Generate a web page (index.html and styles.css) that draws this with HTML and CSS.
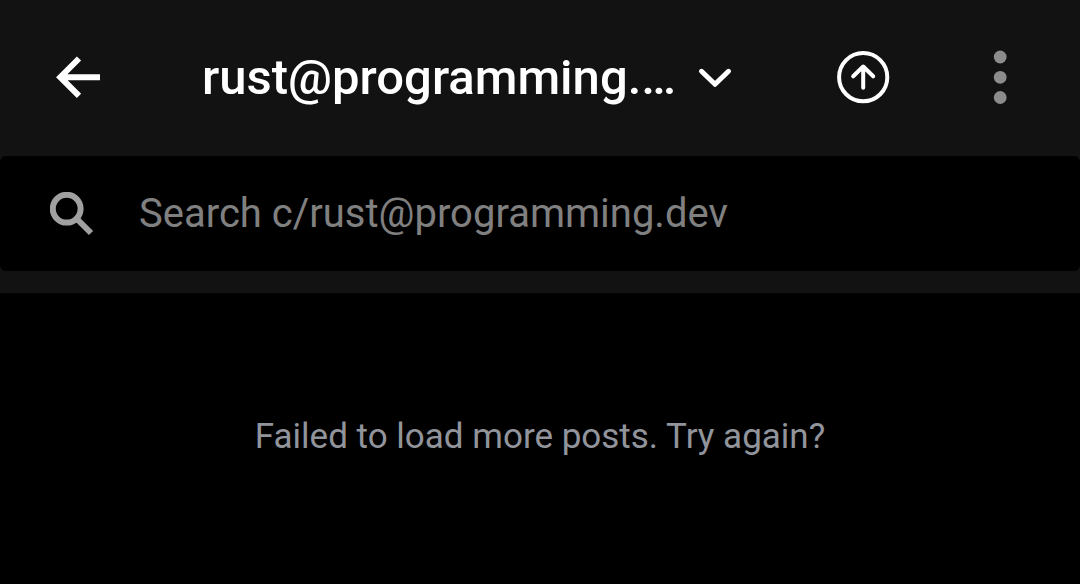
FILE: index.html
```html
<!DOCTYPE html>
<html lang="en">
<head>
<meta charset="utf-8">
<meta name="viewport" content="width=device-width, initial-scale=1">
<title>rust@programming.dev</title>
<link rel="stylesheet" href="styles.css">
</head>
<body>
<header class="header">
  <div class="toolbar">
    <button class="icon-button" type="button" aria-label="Back">
      <svg class="icon-back" viewBox="0 0 48 48" aria-hidden="true"><path d="M25 5.500 6.300 24.200 25 42.900M7 24.200h39"/></svg>
    </button>
    <button class="title" type="button">
      <span class="title-text">rust@programming.dev</span>
      <svg class="icon-chevron" viewBox="0 0 36 24" aria-hidden="true"><path d="M4.500 6.300 18 19.300 31.500 6.300"/></svg>
    </button>
    <button class="icon-button" type="button" aria-label="Sort by top">
      <svg class="icon-sort" viewBox="0 0 56 56" aria-hidden="true"><circle cx="27.200" cy="28.200" r="24.100"/><path d="M27.200 38.800V17.500M17.200 27.300 27.200 17.500 37.200 27.300"/></svg>
    </button>
    <button class="icon-button" type="button" aria-label="More options">
      <svg class="icon-more" viewBox="0 0 16 56" aria-hidden="true"><circle cx="8.200" cy="8" r="6.400"/><circle cx="8.200" cy="28.300" r="6.400"/><circle cx="8.200" cy="48.500" r="6.400"/></svg>
    </button>
  </div>
  <label class="search">
    <svg class="icon-search" viewBox="0 0 44 44" aria-hidden="true"><circle cx="16.700" cy="16.700" r="13.900"/><path d="M26 26l15 15"/></svg>
    <input class="search-input" type="search" aria-label="Search community" placeholder="Search c/rust@programming.dev">
  </label>
</header>
<main class="feed">
  <button class="retry" type="button">Failed to load more posts. Try again?</button>
</main>
</body>
</html>
```
FILE: styles.css
```css
* { box-sizing: border-box; }
body {
  margin: 0;
  background: #000;
  color: #fff;
  font-family: Roboto, "Liberation Sans", sans-serif;
}
button {
  margin: 0;
  padding: 0;
  border: 0;
  background: none;
  color: inherit;
  font: inherit;
}
svg {
  display: block;
  flex: none;
  fill: none;
  stroke: currentColor;
}
.header {
  padding-bottom: 22px;
  background: #121212;
}
.toolbar {
  display: flex;
  align-items: center;
  height: 156px;
  padding: 0 12px 2px 10px;
}
.icon-button {
  display: grid;
  place-items: center;
  flex: none;
  width: 136px;
  height: 136px;
}
.title {
  display: flex;
  flex: 1;
  align-items: center;
  gap: 20px;
  min-width: 0;
  padding: 0 63px 0 56px;
  font-size: 49px;
  font-weight: 500;
  line-height: 64px;
}
.title-text {
  overflow: hidden;
  min-width: 0;
  padding-top: 2px;
  text-overflow: ellipsis;
  white-space: nowrap;
}
.icon-back { width: 48px; height: 48px; stroke-width: 6; }
.icon-chevron { width: 36px; height: 24px; stroke-width: 5; stroke-linecap: round; stroke-linejoin: round; }
.icon-sort { width: 56px; height: 56px; stroke-width: 4; stroke-linecap: round; stroke-linejoin: round; }
.icon-more { width: 16px; height: 56px; fill: #8c8c8c; stroke: none; }
.search {
  display: flex;
  align-items: center;
  gap: 45px;
  height: 115px;
  padding: 0 50px;
  border-radius: 6px;
  background: #000;
}
.icon-search { width: 44px; height: 44px; color: #a0a0a0; stroke-width: 6; }
.search-input {
  flex: 1;
  min-width: 0;
  padding: 0;
  border: 0;
  outline: 0;
  background: none;
  color: #fff;
  font: 400 40px/56px Roboto, "Liberation Sans", sans-serif;
}
.search-input::placeholder { color: #808080; opacity: 1; }
.feed {
  display: grid;
  place-items: center;
  min-height: 288px;
  padding: 24px;
}
.retry {
  color: #92949c;
  font-size: 35px;
  line-height: 48px;
}
```
